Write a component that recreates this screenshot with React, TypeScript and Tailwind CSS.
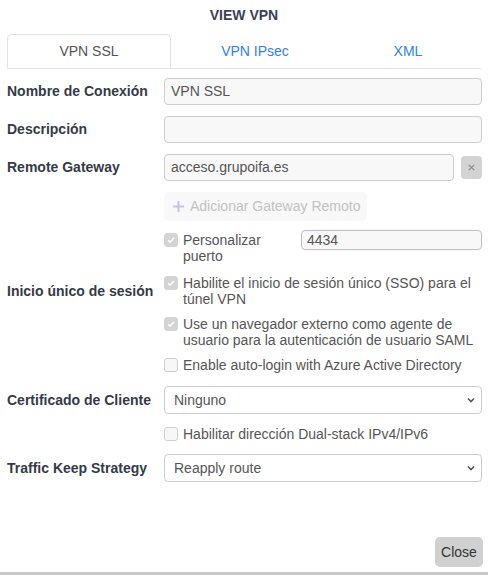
import { type ReactNode } from "react";

function Check({ checked }: { checked?: boolean }) {
  return (
    <span
      className={`mt-[1px] flex h-[14px] w-[14px] shrink-0 items-center justify-center rounded-[3px] border ${
        checked ? "border-[#d4d4d4] bg-[#d4d4d4]" : "border-[#cfcfcf] bg-[#f7f7f7]"
      }`}
    >
      {checked && (
        <svg viewBox="0 0 12 12" className="h-[10px] w-[10px]">
          <path d="M2.5 6.2 L5 8.6 L9.6 3.4" fill="none" stroke="#fff" strokeWidth="1.8" />
        </svg>
      )}
    </span>
  );
}

function Row({ label, children, className = "" }: { label?: string; children: ReactNode; className?: string }) {
  return (
    <div className={`flex items-center ${className}`}>
      <div className="w-[157px] shrink-0 font-bold text-[#353a45]">{label}</div>
      <div className="flex-1">{children}</div>
    </div>
  );
}

function Field({ value }: { value?: string }) {
  return (
    <div className="flex h-[27px] items-center rounded-[4px] border border-[#cdcdcd] bg-[#f8f8f8] px-[6px] text-[#555]">
      {value}
    </div>
  );
}

function Select({ value }: { value: string }) {
  return (
    <div className="flex h-[28px] items-center justify-between rounded-[4px] border border-[#cdcdcd] bg-white pl-[9px] pr-[5px] text-[#555]">
      <span>{value}</span>
      <svg viewBox="0 0 10 10" className="h-[10px] w-[10px]">
        <path d="M2 3.5 L5 6.5 L8 3.5" fill="none" stroke="#555" strokeWidth="1.6" />
      </svg>
    </div>
  );
}

function CheckLine({ checked, children }: { checked?: boolean; children: ReactNode }) {
  return (
    <div className="flex items-start gap-[5px] leading-[16px] text-[#555]">
      <Check checked={checked} />
      <span>{children}</span>
    </div>
  );
}

export default function App() {
  return (
    <div className="relative h-[575px] w-[488px] bg-white font-['Liberation_Sans',Arial,sans-serif] text-[14px]">
      <div className="pt-[7px] text-center font-bold leading-[17px] text-[#3c4250]">VIEW VPN</div>

      {/* Tabs */}
      <div className="mx-[7px] mt-[10px] flex border-b border-[#dee2e6] pr-[2px]">
        <div className="-mb-px flex h-[34px] w-[164px] items-center justify-center rounded-t-[5px] border border-[#dee2e6] border-b-white bg-white text-[#555]">
          VPN SSL
        </div>
        <div className="flex h-[34px] flex-1 items-center justify-center text-[#2f7ff0]">VPN IPsec</div>
        <div className="flex h-[34px] w-[140px] items-center justify-center pr-[2px] text-[#2f7ff0]">XML</div>
      </div>

      <div className="px-[7px] pr-[6px]">
        <Row label="Nombre de Conexión" className="mt-[9px]">
          <Field value="VPN SSL" />
        </Row>
        <Row label="Descripción" className="mt-[11px]">
          <Field />
        </Row>
        <Row label="Remote Gateway" className="mt-[11px]">
          <div className="flex items-center gap-[7px]">
            <div className="flex-1">
              <Field value="acceso.grupoifa.es" />
            </div>
            <div className="flex h-[23px] w-[21px] items-center justify-center rounded-[4px] bg-[#d3d3d3]">
              <svg viewBox="0 0 10 10" className="h-[9px] w-[9px]">
                <path d="M2 2 L8 8 M8 2 L2 8" stroke="#8a8a8a" strokeWidth="1.3" />
              </svg>
            </div>
          </div>
        </Row>
        <Row className="mt-[11px]">
          <div className="flex h-[29px] w-[203px] items-center gap-[5px] rounded-[5px] bg-[#f8f8f8] pl-[8px] text-[#c2c2c2]">
            <svg viewBox="0 0 14 14" className="h-[13px] w-[13px]">
              <path d="M7 1 V13 M1 7 H13" stroke="#c9c2e0" strokeWidth="2.2" />
            </svg>
            <span>Adicionar Gateway Remoto</span>
          </div>
        </Row>
        <Row className="mt-[11px]">
          <div className="flex items-start">
            <div className="w-[137px]">
              <CheckLine checked>
                Personalizar
                <br />
                puerto
              </CheckLine>
            </div>
            <div className="mt-[-2px] flex h-[20px] flex-1 items-center rounded-[4px] border border-[#bdbdbd] bg-[#f8f8f8] px-[5px] text-[#555]">
              4434
            </div>
          </div>
        </Row>
        <Row label="Inicio único de sesión" className="mt-[11px]">
          <CheckLine checked>
            Habilite el inicio de sesión único (SSO) para el túnel VPN
          </CheckLine>
        </Row>
        <Row className="mt-[9px]">
          <CheckLine checked>
            Use un navegador externo como agente de usuario para la autenticación de usuario SAML
          </CheckLine>
        </Row>
        <Row className="mt-[9px]">
          <CheckLine>Enable auto-login with Azure Active Directory</CheckLine>
        </Row>
        <Row label="Certificado de Cliente" className="mt-[13px]">
          <Select value="Ninguno" />
        </Row>
        <Row className="mt-[12px]">
          <CheckLine>Habilitar dirección Dual-stack IPv4/IPv6</CheckLine>
        </Row>
        <Row label="Traffic Keep Strategy" className="mt-[12px]">
          <Select value="Reapply route" />
        </Row>
      </div>

      <div className="absolute bottom-[8px] right-[5px] flex h-[30px] w-[48px] items-center justify-center rounded-[5px] bg-[#d0d0d0] text-[#333]">
        Close
      </div>
      <div className="absolute bottom-0 left-0 h-[3px] w-full bg-[#c8c8c8]" />
    </div>
  );
}
